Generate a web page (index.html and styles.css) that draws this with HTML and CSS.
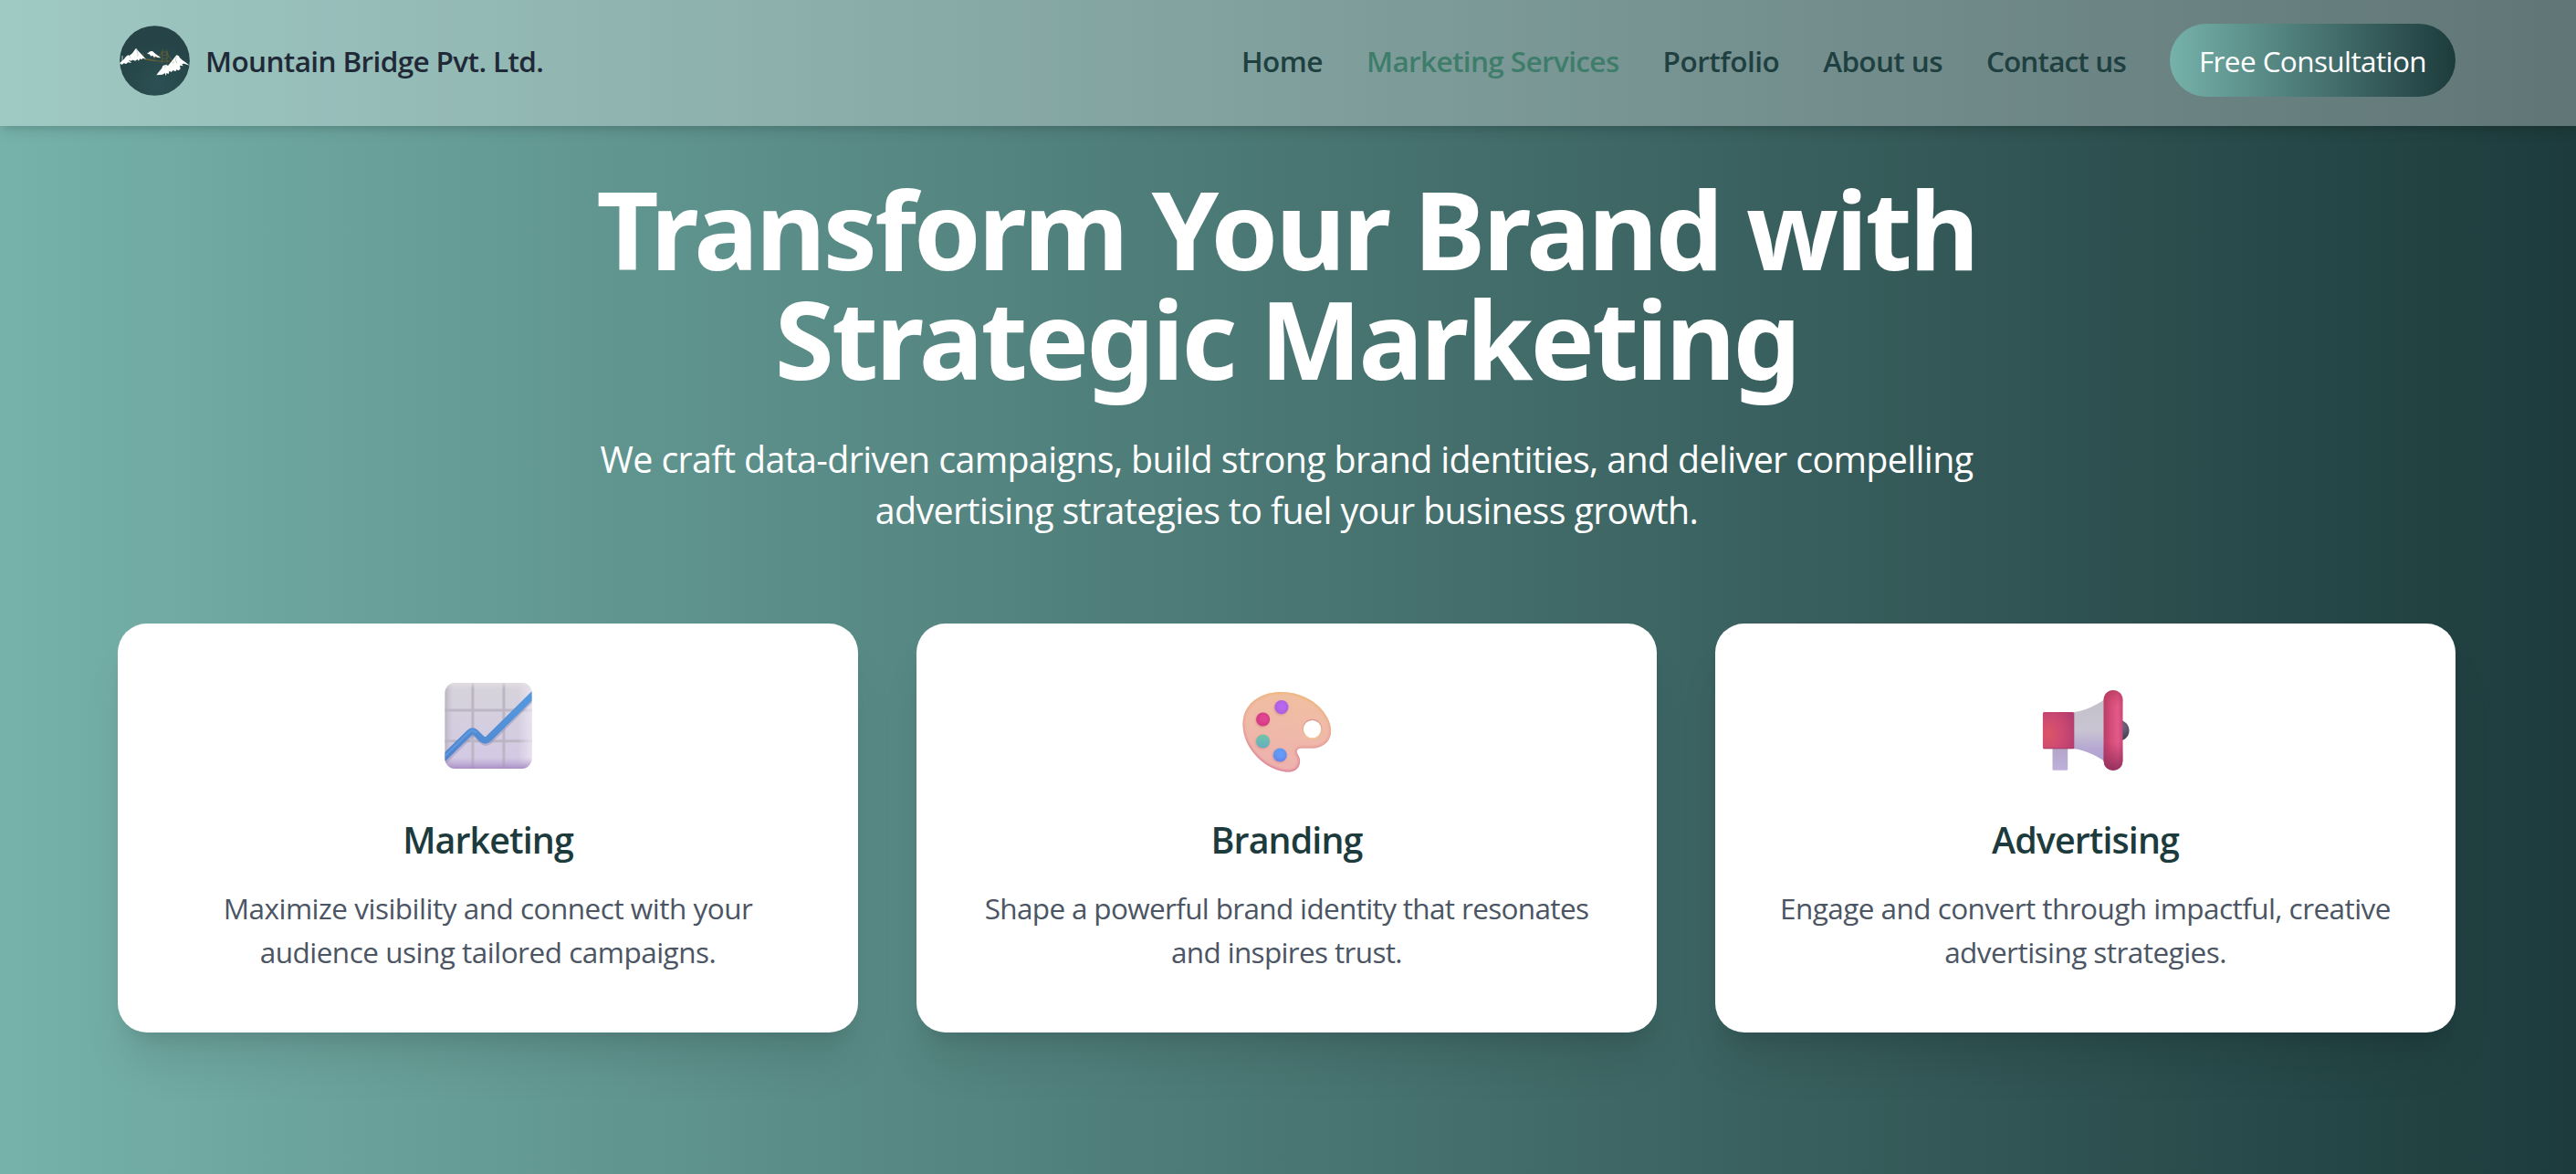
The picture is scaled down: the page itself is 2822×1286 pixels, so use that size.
FILE: index.html
```html
<!DOCTYPE html>
<html lang="en">
<head>
<meta charset="utf-8">
<title>Mountain Bridge Pvt. Ltd.</title>
<link rel="stylesheet" href="styles.css">
</head>
<body>
<header class="header">
  <a class="brand">
    <svg class="logo" viewBox="18 21 231 231">
      <defs><radialGradient id="lg" cx=".55" cy=".85" r=".6"><stop offset="0" stop-color="#2b5053"/><stop offset="1" stop-color="#264447"/></radialGradient>
      <clipPath id="lc"><circle cx="133.500" cy="136.500" r="115"/></clipPath></defs>
      <circle cx="133.500" cy="136.500" r="115" fill="url(#lg)"/>
      <g clip-path="url(#lc)">
        <g fill="none" stroke="#75642f" stroke-width="2">
          <path d="M158 146V104M174 146V104M156 108h20M157 118h18M157 129h18M158 104l4-3M174 104l-4-3"/>
          <path d="M94 112q2 16 12 20h14M100 132l36 4M128 128q22-4 30-20M174 108q6 24 26 32M140 138h42M112 134l28 4" stroke-width="2.500"/>
        </g>
        <path d="M24 120h6v18h-6z" fill="#6f8a8b"/>
        <g fill="#fff">
          <path d="M18 144l14-12 6-8 8-6 4 2 10-8 12-17 8 10 8 8 14 16 4 3-12-4-3 5-6-3-4 7-5-5-6 5-9-3-5 3-9-2 11 9-13-2-5 5-8-2-7 5-3-4-6 4z"/>
          <path d="M108 114l10-8 8-1 10 9 18 13-12-1-6-4-4 4-6-7-5 3-5-7z"/>
          <path d="M139 184l9-12 9-11 3-8 11-4 6 4 13-16 15-19 8 3 2 5 10 9 10 7 13 10-18-6-7 1 4 7-11-2 2 11-6 6-7-3-3 6-8-4-6 6-6-4-3 10-6-3-4 9-2-9-8 5z"/>
        </g>
        <path d="M72 97l5 11 1 14M50 120l4 8M205 122l-3 13 5 11M170 150l-4 10" fill="none" stroke="#aebbb9" stroke-width="2"/>
        <path d="M188 146l8-10 3 8z" fill="#e6dfd0"/>
      </g>
    </svg>
    <span class="brand-name">Mountain Bridge Pvt. Ltd.</span>
  </a>
  <nav class="nav">
    <a class="link link-home">Home</a>
    <a class="link link-active">Marketing Services</a>
    <a class="link link-portfolio">Portfolio</a>
    <a class="link">About us</a>
    <a class="link link-contact">Contact us</a>
    <a class="button">Free Consultation</a>
  </nav>
</header>
<main class="hero">
  <h1 class="title"><span class="line">Transform Your Brand with</span><span class="line">Strategic Marketing</span></h1>
  <p class="lead"><span class="line">We craft data-driven campaigns, build strong brand identities, and deliver compelling</span><span class="line">advertising strategies to fuel your business growth.</span></p>
  <section class="cards">
    <article class="card">
      <svg class="icon" viewBox="0 0 96 96">
        <defs>
          <linearGradient id="c1" x1="0" y1="0" x2="0" y2="1"><stop offset="0" stop-color="#d7d4da"/><stop offset=".5" stop-color="#d4cee0"/><stop offset="1" stop-color="#d2c8e4"/></linearGradient>
          <linearGradient id="c2" x1="0" y1="0" x2="0" y2="1"><stop offset="0" stop-color="#e6e4e6" stop-opacity=".8"/><stop offset=".08" stop-color="#e0dde4" stop-opacity="0"/><stop offset=".86" stop-color="#b9a3d0" stop-opacity="0"/><stop offset="1" stop-color="#a284bf" stop-opacity=".95"/></linearGradient>
          <linearGradient id="c3" x1="0" y1="0" x2="1" y2="0"><stop offset="0" stop-color="#b5aebd" stop-opacity=".9"/><stop offset=".1" stop-color="#c8c2d0" stop-opacity="0"/><stop offset=".84" stop-color="#eee6f2" stop-opacity="0"/><stop offset="1" stop-color="#eee4f2" stop-opacity=".85"/></linearGradient>
          <linearGradient id="c4" x1="0" y1="1" x2="1" y2="0"><stop offset="0" stop-color="#4f83cf"/><stop offset="1" stop-color="#559ade"/></linearGradient>
          <clipPath id="cc"><rect x=".5" y="1" width="95" height="94" rx="11"/></clipPath>
        </defs>
        <g clip-path="url(#cc)">
          <path d="M0 0h96v96H0z" fill="url(#c1)"/>
          <path d="M30.900 0v96M64.900 0v96M0 31h96M0 64.800h96" stroke="#bcb6c4" stroke-width="3"/>
          <path d="M0 0h96v96H0z" fill="url(#c3)"/>
          <path d="M0 0h96v96H0z" fill="url(#c2)"/>
          <path d="M-4 87.500L27.500 56Q31 52.500 34.500 56L41 62.500Q44.500 66 48.500 62.500L100 11" transform="translate(.6 1.600)" fill="none" stroke="#9c93b8" stroke-opacity=".5" stroke-width="8"/>
          <path d="M-4 86.500L27.500 55.500Q31 52.500 34.500 56L41 62.500Q44.500 65.500 48.500 62L100 11" fill="none" stroke="url(#c4)" stroke-width="7.400"/>
          <path d="M-4 85.500L27.500 54.500Q31 51.500 35 55.500" fill="none" stroke="#6aa5e4" stroke-opacity=".6" stroke-width="2"/>
        </g>
      </svg>
      <h2 class="card-title">Marketing</h2>
      <p class="card-text card-text-marketing">Maximize visibility and connect with your<br>audience using tailored campaigns.</p>
    </article>
    <article class="card">
      <svg class="icon" viewBox="0 0 96 96">
        <defs>
          <linearGradient id="p1" x1=".6" y1="0" x2=".4" y2="1"><stop offset="0" stop-color="#f0bfa0"/><stop offset=".5" stop-color="#efb9a9"/><stop offset="1" stop-color="#eeb0ae"/></linearGradient>
          <linearGradient id="p2" x1=".6" y1="0" x2=".4" y2="1"><stop offset="0" stop-color="#f0b878"/><stop offset=".5" stop-color="#e8a394"/><stop offset="1" stop-color="#d97f98"/></linearGradient>
          <linearGradient id="p3" x1="0" y1="0" x2="0" y2="1"><stop offset="0" stop-color="#d99292"/><stop offset="1" stop-color="#f3c78f"/></linearGradient>
          <linearGradient id="p4" x1="0" y1="0" x2="0" y2="1"><stop offset="0" stop-color="#73c5a6"/><stop offset="1" stop-color="#63adc4"/></linearGradient>
          <linearGradient id="p5" x1="0" y1="0" x2="0" y2="1"><stop offset="0" stop-color="#5f9df0"/><stop offset="1" stop-color="#6684ee"/></linearGradient>
          <filter id="soft" x="-20%" y="-20%" width="140%" height="140%"><feGaussianBlur stdDeviation=".9"/></filter>
          <clipPath id="pc"><path id="pal" d="M41.800 11C63 11 83 22 92 39C96 46 97.500 55 94.500 61.500C91 69 83.500 72.600 75 72.600H64C60 72.600 57.300 75 59.300 78.500C62 83 63.200 87 61 92C58.500 97.500 53 99 46.500 98.500C33 97 18 88 8.500 74C2 64 -.7 55 -.5 45C0 26 16 11 41.800 11Z"/></clipPath>
        </defs>
        <use href="#pal" fill="url(#p1)"/>
        <g clip-path="url(#pc)"><use href="#pal" fill="none" stroke="url(#p2)" stroke-width="3.500" filter="url(#soft)"/></g>
        <circle cx="75.600" cy="51.600" r="10.300" fill="#fff" stroke="url(#p3)" stroke-width="1.200"/>
        <g fill="#d08b86" fill-opacity=".6" filter="url(#soft)"><circle cx="41.200" cy="28.700" r="7.800"/><circle cx="20.900" cy="42" r="7.800"/><circle cx="20.900" cy="66" r="7.800"/><circle cx="39.600" cy="81" r="7.800"/></g>
        <circle cx="41.900" cy="27.600" r="7.600" fill="#af60e2"/><circle cx="42.400" cy="26.800" r="4.800" fill="#b768ee" filter="url(#soft)"/>
        <circle cx="21.600" cy="41" r="7.600" fill="#d63d85"/><circle cx="22.500" cy="40" r="4.800" fill="#e04490" filter="url(#soft)"/>
        <circle cx="21.600" cy="65" r="7.600" fill="url(#p4)"/>
        <circle cx="40.300" cy="80" r="7.600" fill="url(#p5)"/><circle cx="40.800" cy="79.500" r="4.600" fill="#649bf6" filter="url(#soft)"/>
      </svg>
      <h2 class="card-title">Branding</h2>
      <p class="card-text card-text-branding">Shape a powerful brand identity that resonates<br>and inspires trust.</p>
    </article>
    <article class="card">
      <svg class="icon" viewBox="0 0 96 96">
        <defs>
          <radialGradient id="m1" cx=".18" cy=".6" r=".9"><stop offset="0" stop-color="#dc5566"/><stop offset=".5" stop-color="#cd4a72"/><stop offset="1" stop-color="#b43c6f"/></radialGradient>
          <linearGradient id="m2" x1="0" y1="0" x2="0" y2="1"><stop offset="0" stop-color="#c4c1cb"/><stop offset=".5" stop-color="#c8c4d2"/><stop offset=".8" stop-color="#b5a8d2"/><stop offset="1" stop-color="#b0a2cf"/></linearGradient>
          <linearGradient id="m3" x1="0" y1="0" x2="1" y2="0"><stop offset="0" stop-color="#b83c66"/><stop offset=".45" stop-color="#d94f7c"/><stop offset=".75" stop-color="#e35988"/><stop offset="1" stop-color="#c54877"/></linearGradient>
          <linearGradient id="m4" x1="0" y1="0" x2="0" y2="1"><stop offset="0" stop-color="#a93550" stop-opacity=".6"/><stop offset=".2" stop-color="#c0405e" stop-opacity="0"/><stop offset=".65" stop-color="#9b3160" stop-opacity="0"/><stop offset="1" stop-color="#90305c" stop-opacity=".95"/></linearGradient>
          <linearGradient id="m5" x1="0" y1="0" x2="0" y2="1"><stop offset="0" stop-color="#b3a5c6"/><stop offset="1" stop-color="#bdb0da"/></linearGradient>
          <radialGradient id="m6" cx=".65" cy=".3" r=".7"><stop offset="0" stop-color="#756b84"/><stop offset="1" stop-color="#3f3650"/></radialGradient>
        </defs>
        <circle cx="84" cy="53.200" r="11.500" fill="url(#m6)"/>
        <rect x="11.500" y="70" width="16.700" height="26.800" rx="1.200" fill="url(#m5)"/>
        <path d="M35 33C46 31.500 58 26.500 68 19.500V86.500C58 79.500 46 74.500 35 73.300Z" fill="url(#m2)"/>
        <rect x=".9" y="33" width="34.400" height="40.300" rx="1.500" fill="url(#m1)"/>
        <path d="M1.600 72.600h33.500" stroke="#9c3a68" stroke-width="1.200" stroke-opacity=".6"/>
        <rect x="67.500" y="9" width="21" height="88" rx="10.500" fill="url(#m3)"/>
        <rect x="67.500" y="9" width="21" height="88" rx="10.500" fill="url(#m4)"/>
      </svg>
      <h2 class="card-title">Advertising</h2>
      <p class="card-text">Engage and convert through impactful, creative<br>advertising strategies.</p>
    </article>
  </section>
</main>
</body>
</html>
```
FILE: styles.css
```css
* { box-sizing: border-box; margin: 0; padding: 0; }

body {
  min-height: 1286px;
  font-family: "Open Sans", "Noto Sans", sans-serif;
  background: linear-gradient(to right, #76b2aa, #1d3b3c);
}

.header {
  display: flex;
  align-items: center;
  justify-content: space-between;
  height: 138px;
  padding: 0 132px 6px 131px;
  background: rgba(255, 255, 255, 0.3);
  box-shadow: 0 8px 12px -2px rgba(0, 0, 0, 0.1), 0 4px 8px -4px rgba(0, 0, 0, 0.1);
}

.brand { display: flex; align-items: center; gap: 17px; }
.logo { display: block; width: 77px; height: 77px; }

.brand-name,
.link {
  font-size: 31.5px;
  font-weight: 600;
  line-height: 48px;
  letter-spacing: -0.62px;
  white-space: nowrap;
  padding-top: 1px;
}

.brand-name { color: #1f2937; }

.nav { display: flex; align-items: center; gap: 48px; }
.link { color: #1f4040; }
.link-home { letter-spacing: -0.5px; }
.link-active { color: #3f7d6b; }
.link-portfolio { letter-spacing: -0.5px; }
.link-contact { letter-spacing: -0.85px; }

.button {
  height: 80px;
  padding: 17px 32px 15px;
  border-radius: 40px;
  font-size: 31.5px;
  line-height: 48px;
  letter-spacing: -0.6px;
  white-space: nowrap;
  color: #fff;
  background: linear-gradient(to right, #76b2aa, #1d3b3c);
}

.hero {
  padding: 53px 132px 0 129px;
  text-align: center;
  color: #fff;
}

.line { display: block; white-space: nowrap; }

.title {
  font-family: "Noto Sans", "Open Sans", sans-serif;
  font-size: 118px;
  font-weight: 700;
  line-height: 120px;
  letter-spacing: -2.9px;
}

.lead {
  margin-top: 44px;
  font-size: 39.4px;
  line-height: 56px;
  letter-spacing: -0.64px;
}

.cards {
  display: grid;
  grid-template-columns: repeat(3, 1fr);
  gap: 64px;
  margin-top: 96px;
}

.card {
  height: 448px;
  padding: 64px 32px;
  border-radius: 32px;
  background: #fff;
  box-shadow: 0 40px 50px -10px rgba(0, 0, 0, 0.1), 0 16px 20px -12px rgba(0, 0, 0, 0.1);
}

.icon {
  display: block;
  width: 96px;
  height: 96px;
  margin: 0 auto 49px;
  overflow: visible;
}

.card-title {
  margin-bottom: 23px;
  font-size: 39.4px;
  font-weight: 600;
  line-height: 56px;
  letter-spacing: -0.9px;
  color: #1d3b3c;
}

.card-text {
  font-size: 31.5px;
  line-height: 48px;
  letter-spacing: -0.55px;
  white-space: nowrap;
  color: #4b5563;
}

.card-text-marketing { letter-spacing: -0.5px; }
.card-text-branding { letter-spacing: -0.66px; }
```
